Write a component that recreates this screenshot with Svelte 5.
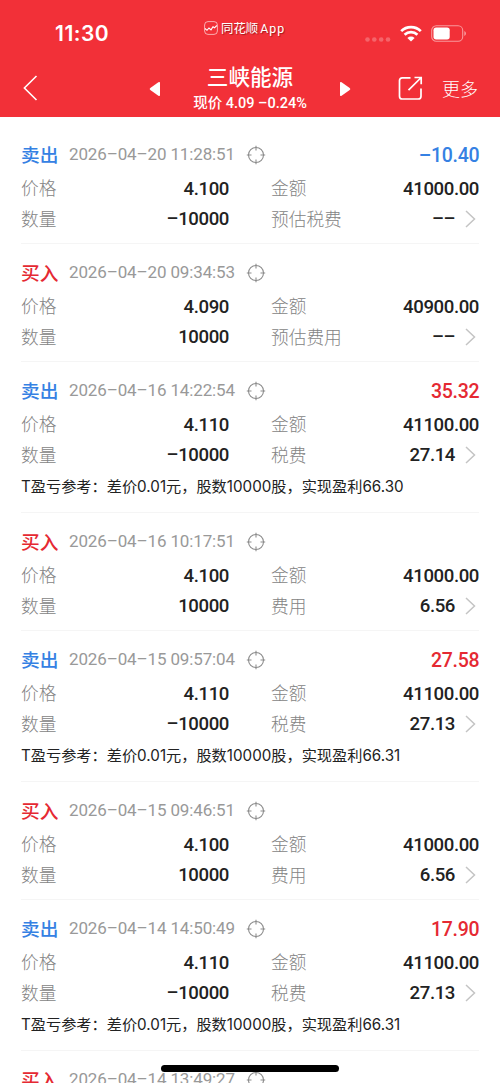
<script lang="ts">
  type Trade = {
    side: "buy" | "sell";
    time: string;
    profit?: string;
    price: string;
    count: string;
    amount: string;
    feeLabel: string;
    fee: string;
    note?: string;
  };

  const trades: Trade[] = [
    { side: "sell", time: "2026–04–20 11:28:51", profit: "–10.40", price: "4.100", count: "–10000", amount: "41000.00", feeLabel: "预估税费", fee: "––" },
    { side: "buy", time: "2026–04–20 09:34:53", price: "4.090", count: "10000", amount: "40900.00", feeLabel: "预估费用", fee: "––" },
    { side: "sell", time: "2026–04–16 14:22:54", profit: "35.32", price: "4.110", count: "–10000", amount: "41100.00", feeLabel: "税费", fee: "27.14", note: "T盈亏参考：差价0.01元，股数10000股，实现盈利66.30" },
    { side: "buy", time: "2026–04–16 10:17:51", price: "4.100", count: "10000", amount: "41000.00", feeLabel: "费用", fee: "6.56" },
    { side: "sell", time: "2026–04–15 09:57:04", profit: "27.58", price: "4.110", count: "–10000", amount: "41100.00", feeLabel: "税费", fee: "27.13", note: "T盈亏参考：差价0.01元，股数10000股，实现盈利66.31" },
    { side: "buy", time: "2026–04–15 09:46:51", price: "4.100", count: "10000", amount: "41000.00", feeLabel: "费用", fee: "6.56" },
    { side: "sell", time: "2026–04–14 14:50:49", profit: "17.90", price: "4.110", count: "–10000", amount: "41100.00", feeLabel: "税费", fee: "27.13", note: "T盈亏参考：差价0.01元，股数10000股，实现盈利66.31" },
  ];
  const next = { side: "buy", time: "2026–04–14 13:49:27" } as Trade;
</script>

{#snippet head(trade: Trade)}
  <div class="head">
    <b class={trade.side}>{trade.side === "sell" ? "卖出" : "买入"}</b>
    <time>{trade.time}</time>
    <svg width="20" height="20" viewBox="0 0 20 20" fill="none" stroke="#8c8c8c" stroke-width="1.1">
      <circle cx="10" cy="10" r="7.5" />
      <path d="M10 .8v4.7M10 14.5v4.7M.8 10h4.7M14.5 10h4.7" />
    </svg>
    {#if trade.profit}
      <span class="profit" class:loss={trade.profit.startsWith("–")}>{trade.profit}</span>
    {/if}
  </div>
{/snippet}

<div class="screen">
  <header>
    <div class="status">
      <span class="clock">11:30</span>
      <span class="app">
        <svg width="14" height="14" viewBox="0 0 14 14" fill="none" stroke="#fff">
          <rect x="0.6" y="0.6" width="12.8" height="12.8" rx="3.4" stroke-width="0.8" opacity="0.75" />
          <path d="M1 7.5 3 9.3 5 7l2 1.8L9 5.8l1.5 1L12.8 4.5" stroke-width="1.1" />
        </svg>
        <span>同花顺<i>App</i></span>
      </span>
      <span class="device">
        <svg class="signal" width="26" height="5" viewBox="0 0 26 5" fill="#fff" opacity="0.25">
          <circle cx="2.5" cy="2.5" r="2.3" /><circle cx="9.3" cy="2.5" r="2.3" />
          <circle cx="16.2" cy="2.5" r="2.3" /><circle cx="23" cy="2.5" r="2.3" />
        </svg>
        <svg width="22" height="17" viewBox="0 0 22 17" fill="none" stroke="#fff" stroke-width="2.7">
          <path d="M1.2 6.1a14 14 0 0 1 19.6 0" />
          <path d="M4.6 9.8a9.2 9.2 0 0 1 12.8 0" />
          <path d="M11 16.4 7.4 12.9a5.2 5.2 0 0 1 7.2 0z" fill="#fff" stroke="none" />
        </svg>
        <svg class="battery" width="36" height="17" viewBox="0 0 36 17">
          <rect x="0.7" y="0.7" width="31" height="15.6" rx="4.6" fill="none" stroke="#fff" stroke-width="1.1" opacity="0.5" />
          <rect x="2.5" y="2.6" width="16.2" height="11.8" rx="2.6" fill="#fff" />
          <path d="M33.3 6v5q1.7-.8 1.7-2.5T33.3 6z" fill="#fff" opacity="0.5" />
        </svg>
      </span>
    </div>
    <nav>
      <svg class="back" width="15" height="26" viewBox="0 0 15 26" fill="none" stroke="#fff" stroke-width="1.6">
        <path d="M13.5 1 1.4 13l12.1 12" />
      </svg>
      <div class="stock">
        <svg width="12" height="16" viewBox="0 0 12 16" fill="#fff">
          <path d="M11 2v12q0 1.8-1.6.7L1.3 9Q0 8 1.3 7l8.1-5.7Q11 .2 11 2z" />
        </svg>
        <div class="name">
          <h1>三峡能源</h1>
          <p>现价 4.09 –0.24%</p>
        </div>
        <svg width="12" height="16" viewBox="0 0 12 16" fill="#fff">
          <path d="M1 2v12q0 1.8 1.6.7L10.7 9q1.3-1 0-2L2.6 1.3Q1 .2 1 2z" />
        </svg>
      </div>
      <div class="actions">
        <svg width="25" height="25" viewBox="0 0 25 25" fill="none" stroke="#fff" stroke-width="1.7">
          <path d="M12.5 1.8H4.3Q1.5 1.8 1.5 4.6v15.6q0 2.8 2.8 2.8h15.9q2.8 0 2.8-2.8V12.5" />
          <path d="M16.5 1.5h6.7v6.7M23.2 1.5 10.5 14.2" />
        </svg>
        <span>更多</span>
      </div>
    </nav>
  </header>

  <main>
    {#each trades as trade}
      <section>
        {@render head(trade)}
        <div class="row">
          <span>价格</span><strong>{trade.price}</strong>
          <span>金额</span><strong>{trade.amount}</strong>
        </div>
        <div class="row">
          <span>数量</span><strong>{trade.count}</strong>
          <span>{trade.feeLabel}</span>
          <strong class="fee">
            {trade.fee}
            <svg width="11" height="18" viewBox="0 0 11 18" fill="none" stroke="#c4c4c4" stroke-width="1.5">
              <path d="M1 1l8.5 8L1 17" />
            </svg>
          </strong>
        </div>
        {#if trade.note}
          <p class="note">{trade.note}</p>
        {/if}
      </section>
    {/each}
    <section>
      {@render head(next)}
    </section>
  </main>
  <div class="home"></div>
</div>

<style>
  :global(body) {
    background: #fff;
  }
  .screen {
    position: relative;
    width: 500px;
    height: 1083px;
    overflow: hidden;
    background: #fff;
    font-family: Roboto, "Noto Sans CJK SC", sans-serif;
    color: #222;
  }
  h1,
  p {
    margin: 0;
    font-weight: 400;
  }
  svg {
    display: block;
    flex: none;
  }
  header {
    height: 117px;
    background: #f23038;
    color: #fff;
  }
  .status {
    display: grid;
    grid-template-columns: 204px 1fr 135px;
    height: 60px;
  }
  .clock {
    padding: 19px 0 0 55px;
    font: 600 21px/30px Inter, sans-serif;
    letter-spacing: 0.5px;
  }
  .app {
    display: flex;
    align-items: center;
    gap: 3px;
    height: 20px;
    margin-top: 18px;
    font-size: 12.4px;
    text-shadow: 1px 1px 1px rgb(90 0 0 / 50%);
  }
  .app i {
    margin-left: 2px;
    font-style: normal;
    letter-spacing: 1px;
  }
  .device {
    display: flex;
    align-items: center;
    height: 20px;
    margin-top: 23px;
  }
  .signal {
    margin: 12px 9px 0 0;
  }
  .battery {
    margin-left: 9px;
  }
  nav {
    display: grid;
    grid-template-columns: 126px 248px 126px;
    height: 57px;
  }
  .back {
    margin: 15px 0 0 23px;
  }
  .stock {
    display: flex;
    justify-content: space-between;
    padding: 0 23px;
  }
  .stock > svg {
    margin-top: 21px;
  }
  .name {
    text-align: center;
    white-space: nowrap;
  }
  h1 {
    height: 33px;
    font-size: 21.6px;
    line-height: 35px;
    font-weight: 500;
  }
  .name p {
    font-size: 14.5px;
    line-height: 21px;
    font-weight: 500;
  }
  .actions {
    display: flex;
    align-items: center;
    gap: 19px;
    height: 57px;
    padding-left: 24px;
    font-size: 18px;
    font-weight: 300;
  }
  .actions span {
    margin-top: -2px;
  }
  main {
    padding: 9px 21px 0;
  }
  section {
    box-sizing: border-box;
    padding: 13px 0 8px;
    min-height: 118px;
    border-bottom: 1px solid #f5f5f5;
  }
  .head {
    display: flex;
    align-items: center;
    height: 32px;
    margin-bottom: 2px;
  }
  b {
    width: 48px;
    margin-top: -4px;
    font-size: 18.7px;
    font-weight: 500;
  }
  .sell,
  .profit.loss {
    color: #3581e3;
  }
  .buy,
  .profit {
    color: #e52932;
  }
  time {
    width: 177px;
    margin-top: -2px;
    font-size: 17px;
    letter-spacing: -0.14px;
    white-space: nowrap;
    color: #999;
  }
  .profit {
    margin: 0 -0.3px 0 auto;
    font-size: 19.5px;
    font-weight: 500;
    letter-spacing: -0.3px;
  }
  .head svg {
    margin-top: -1px;
  }
  .row {
    display: grid;
    grid-template-columns: 80px 128px 42px 1fr;
    align-items: center;
    height: 30.5px;
    font-size: 17.7px;
    color: #848484;
    white-space: nowrap;
  }
  .row > span {
    margin-top: -2px;
    font-weight: 300;
  }
  .row > :nth-child(3) {
    padding-left: 42px;
  }
  strong {
    padding-top: 1px;
    text-align: right;
    font-size: 18.6px;
    font-weight: 500;
    letter-spacing: -0.4px;
    color: #222;
  }
  .fee {
    display: flex;
    align-items: center;
    justify-content: flex-end;
    gap: 10px;
    padding-right: 3px;
  }
  .note {
    height: 34px;
    font-family: Inter, "Noto Sans CJK SC", sans-serif;
    font-size: 15.2px;
    line-height: 34px;
    white-space: nowrap;
  }
  .home {
    position: absolute;
    left: 161px;
    bottom: 11px;
    width: 178px;
    height: 7px;
    border-radius: 4px;
    background: #000;
  }
</style>
